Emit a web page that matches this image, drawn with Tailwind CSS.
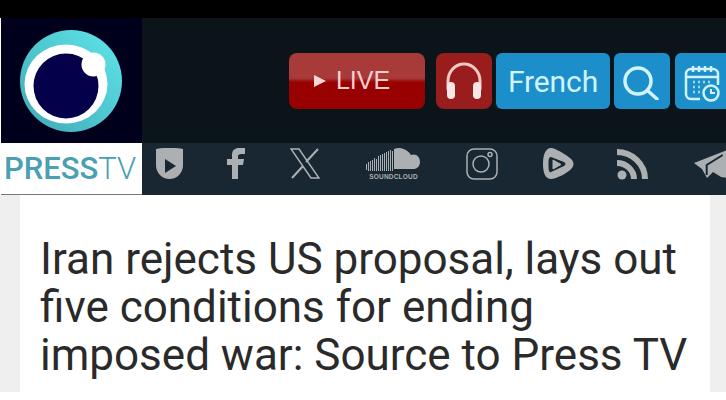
<!DOCTYPE html>
<html>
<head>
<meta charset="utf-8">
<script src="https://cdn.jsdelivr.net/npm/@tailwindcss/browser@4"></script>
</head>
<body class="w-[726px] h-[400px] overflow-hidden bg-white font-['Roboto',sans-serif]">
<div class="h-[18px] bg-black"></div>
<header class="flex h-[177px] border-l border-white">
  <div class="w-[141px] shrink-0 flex flex-col">
    <div class="h-[125px] bg-[#00001c] flex items-center justify-center pr-[1px]">
      <svg width="104" height="104" viewBox="0 0 104 104">
        <defs><linearGradient id="g" x1="0" y1="1" x2="1" y2="0"><stop offset="0" stop-color="#3fa9b4"/><stop offset="1" stop-color="#5fe6ea"/></linearGradient></defs>
        <circle cx="52" cy="52" r="51" fill="url(#g)"/>
        <ellipse cx="47" cy="55" rx="41.500" ry="39.500" fill="#fff"/>
        <circle cx="47" cy="57" r="32.500" fill="#04004a"/>
        <circle cx="74.500" cy="35.500" r="12" fill="#fff"/>
      </svg>
    </div>
    <div class="h-[52px] bg-white border-b border-[#777] flex items-center pl-[3px] text-[31px] leading-none text-[#4a9fb2]"><span class="font-medium">PRESS</span><span class="font-light">TV</span></div>
  </div>
  <div class="flex-1 min-w-0 flex flex-col overflow-hidden">
    <div class="h-[125px] bg-[#0b1419] flex items-center pl-[147px] gap-[4px] pt-[1px]">
      <div class="w-[136px] h-[56px] shrink-0 mr-[7px] pr-[10px] rounded-lg bg-[linear-gradient(#a83a3a_0%,#a83a3a_45%,#990000_52%,#990000_100%)] flex items-center justify-center gap-[10px] text-[#f9cfcf] text-[25px] font-['Liberation_Sans',sans-serif]">
        <svg width="12" height="12" viewBox="0 0 12 12"><path d="M0 0 12 6 0 12Z" fill="#fbd6d6"/></svg>LIVE
      </div>
      <div class="w-[56px] h-[56px] shrink-0 rounded-lg bg-[#9a1d1d] flex items-center justify-center">
        <svg width="40" height="38" viewBox="0 0 40 38" fill="none"><path d="M4 28V19A16 17 0 0 1 36 19V28" stroke="#f0c8c8" stroke-width="3"/><rect x="3" y="20" width="8" height="17" rx="4" fill="#f7e6e6"/><rect x="29" y="20" width="8" height="17" rx="4" fill="#f7e6e6"/></svg>
      </div>
      <div class="w-[114px] h-[56px] shrink-0 rounded-md bg-[#1c8ec9] flex items-center justify-center text-[#cff4ff] text-[30px] tracking-[-0.1px]">French</div>
      <div class="w-[56px] h-[56px] shrink-0 rounded-md bg-[#1c8ec9] flex items-center justify-center">
        <svg width="38" height="38" viewBox="0 0 38 38" fill="none" stroke="#cff4ff" stroke-width="3.500" stroke-linecap="round"><circle cx="15" cy="19" r="13"/><path d="M24.500 28.500 34 37"/></svg>
      </div>
      <div class="w-[60px] h-[56px] shrink-0 ml-[1px] pt-[6px] rounded-l-md bg-[#1c8ec9] flex items-center pl-[8px]">
        <svg width="38" height="38" viewBox="0 0 38 38" fill="none" stroke="#cff4ff" stroke-width="2.500"><path d="M17 34H8a5 5 0 0 1-5-5V9a5 5 0 0 1 5-5h22a5 5 0 0 1 5 5v11"/><path d="M10 1v6M16 1v6M22 1v6M28 1v6M3 12h32"/><circle cx="28" cy="28" r="7.500"/><path d="M28 24v4h4" stroke-width="2"/><path d="M10 17h2M15 17h2M20 17h2M25 17h2M10 22h2M15 22h2M10 27h2M15 27h2" stroke="#9fdcf0" stroke-width="2.500"/></svg>
      </div>
    </div>
    <div class="h-[52px] bg-[#182731] relative text-[#acb0b3]">
      <svg class="absolute left-[14px] top-[5px]" width="27" height="31" viewBox="0 0 27 31"><path d="M0 1C8-.5 19-.5 27 1V17C27 25 21 31 13.500 31 6 31 0 25 0 17Z" fill="#acb0b3"/><path d="M9 11 20 18 9 25Z" fill="#182731"/></svg>
      <svg class="absolute left-[85px] top-[5px]" width="18" height="31" viewBox="0 0 18 31"><path d="M5 31V17H0V11H5V7C5 2 8 0 12 0H18V6H14C12 6 11 7 11 8V11H17L16 17H11V31Z" fill="#acb0b3"/></svg>
      <svg class="absolute left-[148px] top-[5px]" width="30" height="31" viewBox="0 0 30 31" fill="none" stroke="#acb0b3"><path d="M1 1H9L29 30H21Z" stroke-width="1.500"/><path d="M28 1 16 14M13 18 2 30" stroke-width="2"/></svg>
      <svg class="absolute left-[224px] top-[5px]" width="55" height="38" viewBox="0 0 55 38"><g stroke="#acb0b3" stroke-width="1"><path d="M.5 16v6M2.500 14v9M4.500 13v10M6.500 12v11M8.500 10v13M10.500 11v12M12.500 8v15M14.500 7v16M16.500 6v17M18.500 5v18M20.500 4v19M22.500 3v20M24.500 2v21M26.500 3v20"/></g><path d="M29 23V3A14 14 0 0 1 46 9C51 7 55 11 55 16 55 20 52 23 49 23Z" fill="#acb0b3" transform="translate(-1 -2)"/><text x="27.500" y="31" text-anchor="middle" font-family="Liberation Sans" font-weight="700" font-size="6.500" letter-spacing=".2" fill="#acb0b3">SOUNDCLOUD</text></svg>
      <svg class="absolute left-[324px] top-[5px]" width="32" height="32" viewBox="0 0 32 32" fill="none" stroke="#acb0b3" stroke-width="1.500"><rect x="1" y="1" width="30" height="30" rx="7"/><circle cx="15" cy="16" r="8"/><circle cx="24" cy="6.500" r="2" stroke-width="1.500"/></svg>
      <svg class="absolute left-[401px] top-[5px]" width="31" height="31" viewBox="0 0 31 31"><path fill-rule="evenodd" d="M8 0C12 0 26 8 29 12 31 15 31 17 29 20 25 25 13 31 8 31 3 31 0 26 0 16 0 6 3 0 8 0ZM8 9C6 9 5.500 11 5.500 16 5.500 22 6 25 8 24L21 18C23 17 23 15 21 14Z" fill="#acb0b3"/><path d="M10 12 18 16.500 10 21Z" fill="#acb0b3" stroke="#acb0b3" stroke-linejoin="round"/></svg>
      <svg class="absolute left-[475px] top-[5px]" width="32" height="32" viewBox="0 0 32 32" fill="none" stroke="#acb0b3"><path d="M0 15C9 15 17 22 17 31" stroke-width="6"/><path d="M0 4C15 4 28 16 28 31" stroke-width="6"/><circle cx="5" cy="27" r="4.500" fill="#acb0b3" stroke="none"/></svg>
      <svg class="absolute left-[552px] top-[6px]" width="33" height="32" viewBox="0 0 33 32"><path d="M0 14 33 1V29L27 28 19 23 13 29 8 20Z" fill="#acb0b3"/><path d="M28.700 6 12.700 16V26" fill="none" stroke="#182731" stroke-width="2"/></svg>
    </div>
  </div>
</header>
<main class="bg-white flex h-[197px]">
  <div class="w-[20px] bg-[#efefef]"></div>
  <div class="w-[690px] pt-[40px] pl-[20px]">
    <h1 class="text-[44px] leading-[48px] font-normal text-[#2a2a2a]">Iran rejects US proposal, lays out<br>five conditions for ending<br>imposed war: Source to Press TV</h1>
  </div>
  <div class="w-[16px] bg-[#efefef]"></div>
</main>
</body>
</html>
